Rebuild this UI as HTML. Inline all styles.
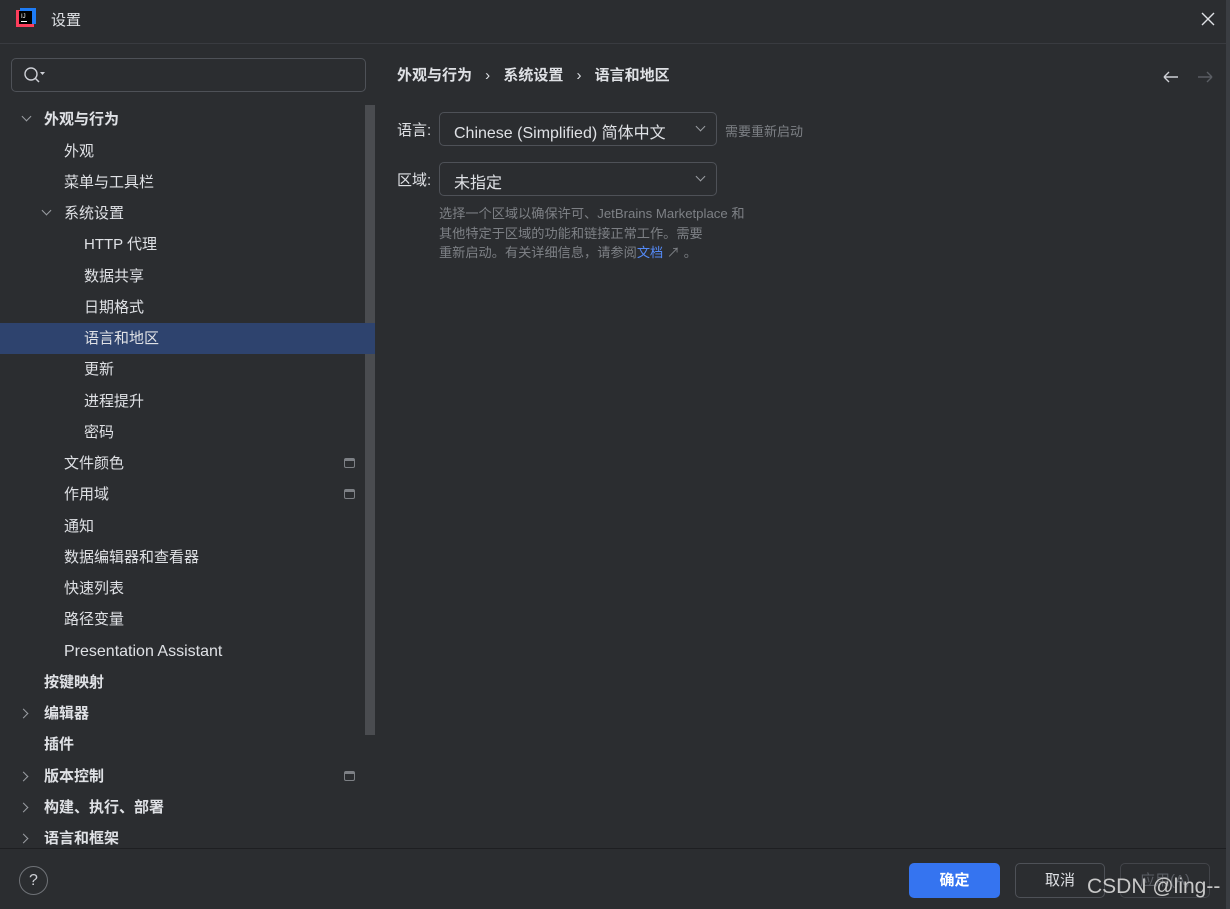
<!DOCTYPE html>
<html><head><meta charset="utf-8"><style>
*{margin:0;padding:0;box-sizing:border-box}
body{width:1230px;height:909px;background:#2b2d30;font-family:"Liberation Sans","Noto Sans CJK SC",sans-serif;color:#dfe1e5;position:relative;overflow:hidden;font-size:15px}
.a{position:absolute;white-space:nowrap}
.row{position:absolute;left:0;width:375px;height:31px;line-height:31px;font-size:15px}
.b{font-weight:bold}
.chev{position:absolute;width:7px;height:7px;border-right:1.3px solid #9a9da2;border-bottom:1.3px solid #9a9da2}
.sq{position:absolute;left:344px;top:10px;width:11px;height:10px;border:1.3px solid #7d8085;border-radius:2px;border-top-width:3px}
</style></head><body>
<div class="a" style="left:0;top:0;width:1230px;height:44px;border-bottom:1px solid #393b40"></div>
<svg class="a" style="left:16px;top:8px" width="20" height="20"><rect x="0" y="2" width="18" height="17" fill="#fc3e5c"/><rect x="4" y="0" width="16" height="16" fill="#1e7cf6"/><rect x="3" y="3" width="13" height="13" fill="#000"/><text x="5" y="10" font-size="6" fill="#fff" font-family="Liberation Sans">IJ</text><rect x="5" y="13" width="6" height="1" fill="#fff"/></svg>
<div class="a" style="left:51px;top:9px;font-size:15px">设置</div>
<svg class="a" style="left:1200px;top:11px" width="16" height="16"><path d="M2 2L14 14M14 2L2 14" stroke="#dfe1e5" stroke-width="1.4"/></svg>
<div class="a" style="left:1226px;top:0;width:4px;height:909px;background:#3a3d42"></div>

<div class="a" style="left:11px;top:58px;width:355px;height:34px;border:1px solid #4e5157;border-radius:5px"></div>
<svg class="a" style="left:22px;top:65px" width="26" height="20"><circle cx="9" cy="9" r="6" stroke="#ced0d6" stroke-width="1.4" fill="none"/><path d="M13 13L17 17" stroke="#ced0d6" stroke-width="1.5"/><path d="M18 7h5l-2.5 3z" fill="#ced0d6"/></svg>
<div class="a" style="left:365px;top:105px;width:10px;height:630px;background:#4a4c50"></div>

<div class="row" style="top:323px;background:#2e436e"></div>
<div class="row b" style="top:104px"><span class="chev" style="left:23px;top:9px;transform:rotate(45deg)"></span><span class="a" style="left:44px">外观与行为</span></div>
<div class="row" style="top:136px"><span class="a" style="left:64px">外观</span></div>
<div class="row" style="top:167px"><span class="a" style="left:64px">菜单与工具栏</span></div>
<div class="row" style="top:198px"><span class="chev" style="left:43px;top:9px;transform:rotate(45deg)"></span><span class="a" style="left:64px">系统设置</span></div>
<div class="row" style="top:229px"><span class="a" style="left:84px">HTTP 代理</span></div>
<div class="row" style="top:261px"><span class="a" style="left:84px">数据共享</span></div>
<div class="row" style="top:292px"><span class="a" style="left:84px">日期格式</span></div>
<div class="row" style="top:323px"><span class="a" style="left:84px">语言和地区</span></div>
<div class="row" style="top:354px"><span class="a" style="left:84px">更新</span></div>
<div class="row" style="top:386px"><span class="a" style="left:84px">进程提升</span></div>
<div class="row" style="top:417px"><span class="a" style="left:84px">密码</span></div>
<div class="row" style="top:448px"><span class="a" style="left:64px">文件颜色</span><span class="sq"></span></div>
<div class="row" style="top:479px"><span class="a" style="left:64px">作用域</span><span class="sq"></span></div>
<div class="row" style="top:511px"><span class="a" style="left:64px">通知</span></div>
<div class="row" style="top:542px"><span class="a" style="left:64px">数据编辑器和查看器</span></div>
<div class="row" style="top:573px"><span class="a" style="left:64px">快速列表</span></div>
<div class="row" style="top:604px"><span class="a" style="left:64px">路径变量</span></div>
<div class="row" style="top:636px"><span class="a" style="left:64px;font-size:16px">Presentation Assistant</span></div>
<div class="row b" style="top:667px"><span class="a" style="left:44px">按键映射</span></div>
<div class="row b" style="top:698px"><span class="chev" style="left:20px;top:12px;transform:rotate(-45deg)"></span><span class="a" style="left:44px">编辑器</span></div>
<div class="row b" style="top:729px"><span class="a" style="left:44px">插件</span></div>
<div class="row b" style="top:761px"><span class="chev" style="left:20px;top:12px;transform:rotate(-45deg)"></span><span class="a" style="left:44px">版本控制</span><span class="sq"></span></div>
<div class="row b" style="top:792px"><span class="chev" style="left:20px;top:12px;transform:rotate(-45deg)"></span><span class="a" style="left:44px">构建、执行、部署</span></div>
<div class="row b" style="top:823px"><span class="chev" style="left:20px;top:12px;transform:rotate(-45deg)"></span><span class="a" style="left:44px">语言和框架</span></div>

<div class="a b" style="left:397px;top:64px;font-size:15px">外观与行为 <span style="margin:0 9px;font-weight:normal">›</span> 系统设置 <span style="margin:0 9px;font-weight:normal">›</span> 语言和地区</div>
<svg class="a" style="left:1162px;top:69px" width="56" height="16"><path d="M2 8H16M2 8L7 3M2 8L7 13" stroke="#ced0d6" stroke-width="1.4" fill="none"/><path d="M36 8H50M50 8L45 3M50 8L45 13" stroke="#5a5d63" stroke-width="1.4" fill="none"/></svg>

<div class="a" style="left:397px;top:119px">语言:</div>
<div class="a" style="left:439px;top:112px;width:278px;height:34px;border:1px solid #4e5157;border-radius:5px;background:#2b2d30"></div>
<div class="a" style="left:454px;top:119px;font-size:16px">Chinese (Simplified) 简体中文</div>
<span class="chev" style="left:697px;top:123px;transform:rotate(45deg)"></span>
<div class="a" style="left:725px;top:121px;font-size:13px;color:#7d8085">需要重新启动</div>

<div class="a" style="left:397px;top:169px">区域:</div>
<div class="a" style="left:439px;top:162px;width:278px;height:34px;border:1px solid #4e5157;border-radius:5px"></div>
<div class="a" style="left:454px;top:169px;font-size:16px">未指定</div>
<span class="chev" style="left:697px;top:173px;transform:rotate(45deg)"></span>
<div class="a" style="left:439px;top:204px;font-size:13.2px;color:#7d8085;line-height:19.5px">选择一个区域以确保许可、JetBrains Marketplace 和<br>其他特定于区域的功能和链接正常工作。需要<br>重新启动。有关详细信息，请参阅<span style="color:#548af7">文档</span> ↗ 。</div>

<div class="a" style="left:0;top:848px;width:1226px;height:1px;background:#1e1f22"></div>
<div class="a" style="left:19px;top:866px;width:29px;height:29px;border:1px solid #6f7277;border-radius:50%;text-align:center;line-height:27px;font-size:16px;color:#ced0d6">?</div>
<div class="a b" style="left:909px;top:863px;width:91px;height:35px;background:#3574f0;border-radius:5px;text-align:center;line-height:35px;color:#fff">确定</div>
<div class="a" style="left:1015px;top:863px;width:90px;height:35px;border:1px solid #4e5157;border-radius:5px;text-align:center;line-height:33px">取消</div>
<div class="a" style="left:1120px;top:863px;width:90px;height:35px;border:1px solid #43454a;border-radius:5px;text-align:center;line-height:33px;color:#5a5d63">应用(A)</div>
<div class="a" style="left:1087px;top:875px;font-size:21px;color:#c8c8c8">CSDN @ling--</div>
</body></html>
